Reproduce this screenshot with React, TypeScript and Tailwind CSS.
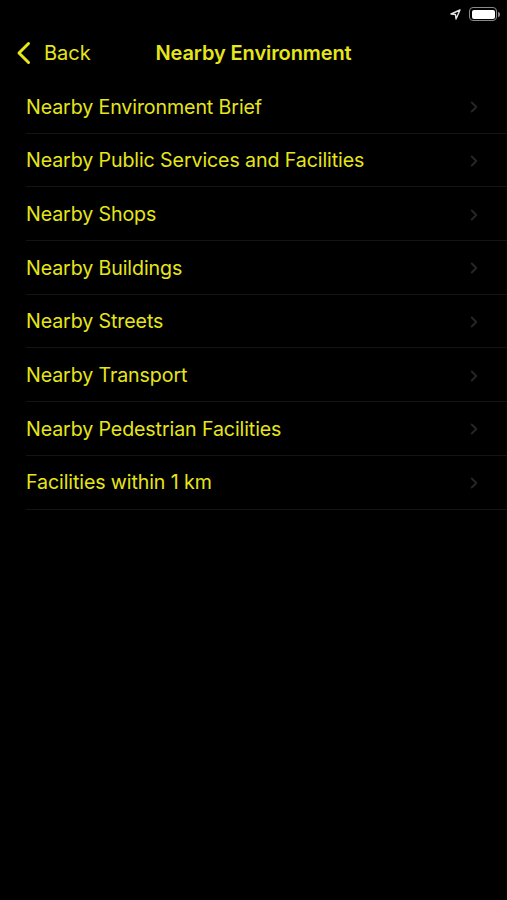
import { ChevronRight } from 'lucide-react';

const items = [
  'Nearby Environment Brief',
  'Nearby Public Services and Facilities',
  'Nearby Shops',
  'Nearby Buildings',
  'Nearby Streets',
  'Nearby Transport',
  'Nearby Pedestrian Facilities',
  'Facilities within 1 km',
];

export default function App() {
  return (
    <div className="min-h-[900px] w-full bg-black text-[#e6e61a] font-['Inter',sans-serif]">
      {/* status bar */}
      <div className="flex h-[27px] items-center justify-end gap-[8px] pr-[7px] pt-[1px]">
        <svg width="11" height="11" viewBox="0 0 11 11">
          <path d="M10 1 L1 5 L5.5 5.5 L6 10 Z" fill="none" stroke="#e5e5e5" strokeWidth="1.4" strokeLinejoin="round" />
        </svg>
        <div className="flex items-center">
          <div className="flex h-[14px] w-[28px] items-center rounded-[4px] border border-[#8a8a8a] p-[1.5px]">
            <div className="h-full w-full rounded-[2px] bg-white" />
          </div>
          <div className="ml-[1px] h-[5px] w-[2px] rounded-r-sm bg-[#8a8a8a]" />
        </div>
      </div>

      {/* nav bar */}
      <div className="relative flex h-[52px] items-center">
        <div className="flex items-center pl-[16px]">
          <svg width="16" height="24" viewBox="0 0 16 24">
            <path d="M12.5 2.5 L3 12 L12.5 21.5" fill="none" stroke="#e6e61a" strokeWidth="3" strokeLinecap="round" strokeLinejoin="round" />
          </svg>
          <span className="ml-[12px] text-[20px] leading-none">Back</span>
        </div>
        <div className="absolute left-1/2 -translate-x-1/2 text-[20px] font-semibold leading-none tracking-[-0.1px]">
          Nearby Environment
        </div>
      </div>

      {/* list */}
      <ul className="pt-[1px]">
        {items.map(item => (
          <li key={item} className="pl-[26px]">
            <div className="flex h-[53.7px] items-center justify-between border-b border-[#141414] pr-[24px] pt-[2px]">
              <span className="text-[19.6px] leading-none tracking-[-0.1px]">{item}</span>
              <ChevronRight className="h-[18px] w-[18px] text-[#262626]" strokeWidth={2.5} />
            </div>
          </li>
        ))}
      </ul>
    </div>
  );
}
